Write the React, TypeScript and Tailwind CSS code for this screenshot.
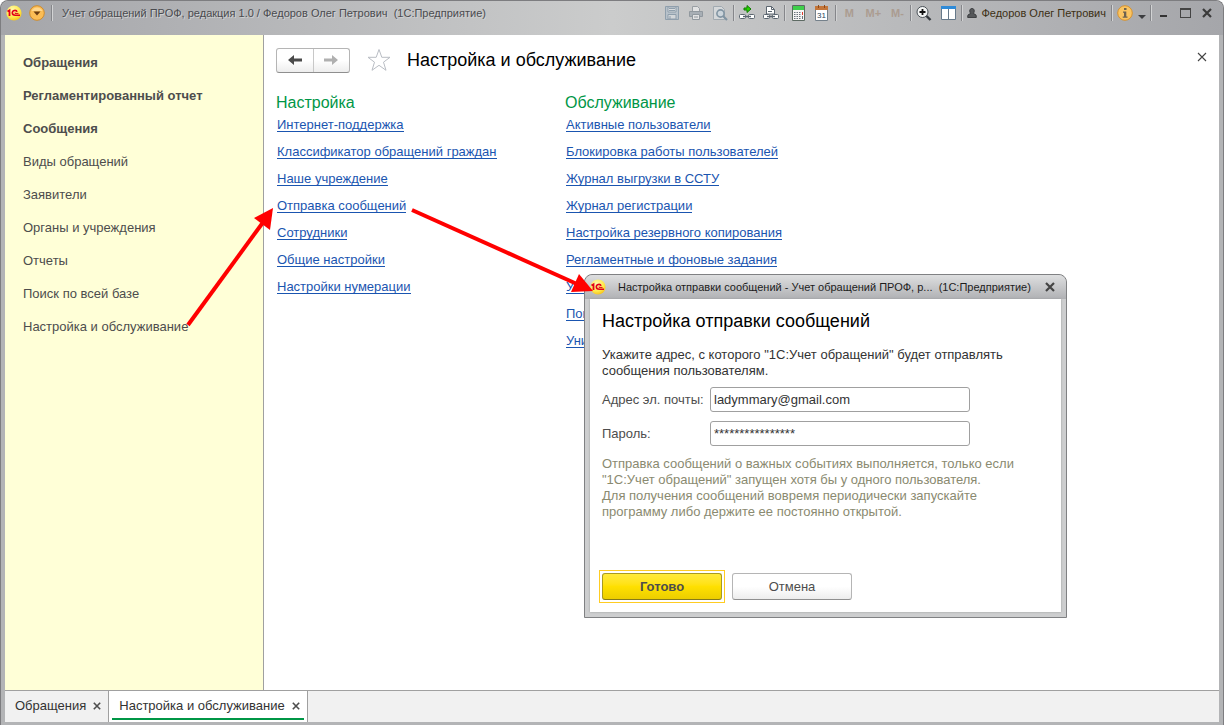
import type { ReactNode } from "react";
import { clsx } from "clsx";

const sections = [
  { title: "Обращения", strong: true },
  { title: "Регламентированный отчет", strong: true },
  { title: "Сообщения", strong: true },
  { title: "Виды обращений" },
  { title: "Заявители" },
  { title: "Органы и учреждения" },
  { title: "Отчеты" },
  { title: "Поиск по всей базе" },
  { title: "Настройка и обслуживание" },
];

const setupLinks = [
  "Интернет-поддержка",
  "Классификатор обращений граждан",
  "Наше учреждение",
  "Отправка сообщений",
  "Сотрудники",
  "Общие настройки",
  "Настройки нумерации",
];

const serviceLinks = [
  "Активные пользователи",
  "Блокировка работы пользователей",
  "Журнал выгрузки в ССТУ",
  "Журнал регистрации",
  "Настройка резервного копирования",
  "Регламентные и фоновые задания",
  "Учет",
  "Поиск",
  "Унив.",
];

function Logo() {
  return (
    <svg className="size-4 shrink-0" viewBox="0 0 16 16" aria-hidden="true">
      <defs>
        <radialGradient id="logo" cx="0.4" cy="0.3" r="0.8">
          <stop offset="0" stopColor="#fffbb0" />
          <stop offset="0.6" stopColor="#ffe94a" />
          <stop offset="1" stopColor="#f2b50c" />
        </radialGradient>
      </defs>
      <circle cx="8" cy="8" r="7.6" fill="url(#logo)" />
      <g fill="none" stroke="#e2001a">
        <path d="M1.500 6.500 3.500 5.300V11" strokeWidth="1.800" />
        <path
          d="M11 6.800C10.600 4.900 6.300 4.700 6.300 7.800c0 2.300 1.700 2.500 3 2.500h4.700"
          strokeWidth="1.600"
        />
        <path d="M9 7.600v.8h3.500" strokeWidth="1" />
      </g>
    </svg>
  );
}

function Separator() {
  return (
    <span className="mx-px h-4 w-px shrink-0 border-l border-[#85868a] shadow-[1px_0_0_#d2d3d4]" />
  );
}

function Tool({
  label,
  dim,
  children,
}: {
  label: string;
  dim?: boolean;
  children: ReactNode;
}) {
  return (
    <button
      type="button"
      aria-label={label}
      className={clsx(
        "flex h-6 w-6 shrink-0 items-center justify-center",
        dim && "opacity-50",
      )}
    >
      {children}
    </button>
  );
}

function Icon({ children }: { children: ReactNode }) {
  return (
    <svg className="size-4" viewBox="0 0 16 16" fill="none" aria-hidden="true">
      {children}
    </svg>
  );
}

function CrossIcon({ className, width = 2 }: { className: string; width?: number }) {
  return (
    <svg className={className} viewBox="0 0 10 10" aria-hidden="true">
      <path d="M1 1l8 8M9 1 1 9" stroke="currentColor" strokeWidth={width} />
    </svg>
  );
}

function Memory({ children }: { children: ReactNode }) {
  return (
    <button
      type="button"
      className="h-6 w-6 shrink-0 text-center text-[11px] font-bold text-[#ab9c91]"
    >
      {children}
    </button>
  );
}

function Chain() {
  return (
    <>
      <rect x="0.5" y="9.5" width="6" height="4" rx="1" fill="#fff" stroke="#5c6670" />
      <rect x="9.5" y="9.5" width="6" height="4" rx="1" fill="#fff" stroke="#5c6670" />
      <path d="M4 11.5h8" stroke="#5c6670" strokeWidth="1.4" />
    </>
  );
}

function TitleBar() {
  return (
    <header className="-mx-1 flex h-[34px] shrink-0 items-start rounded-t-lg bg-linear-to-r from-[#a5a6aa] via-[#cbcccc] to-[#a5a6aa] px-[5px] text-[11px] text-[#3f3f44]">
      <div className="flex h-6 min-w-0 flex-1 items-center">
        <Logo />
        <button type="button" aria-label="Главное меню" className="ml-[7px]">
          <svg className="size-4" viewBox="0 0 16 16" aria-hidden="true">
            <circle cx="8" cy="8" r="7.3" fill="#fbbd55" stroke="#cf8c2d" />
            <path d="M2.5 6a6 6 0 0 1 11 0z" fill="#ffd78d" />
            <path d="M4.5 6.5h7L8 10.5z" fill="#6b3d12" />
          </svg>
        </button>
        <span className="mr-2 ml-1.5 h-4 border-l border-[#85868a] shadow-[1px_0_0_#d2d3d4]" />
        <span className="truncate pl-0.5 text-[#4a4b4f] [text-shadow:1px_1px_0_#d0d1d2]">
          Учет обращений ПРОФ, редакция 1.0 / Федоров Олег Петрович&nbsp; (1С:Предприятие)
        </span>
      </div>
      <div className="flex h-6 shrink-0 items-center">
        <Tool label="Сохранить" dim>
          <Icon>
            <path d="M1.5 1.5h13v13h-13z" fill="#a9bccb" stroke="#587791" />
            <path d="M4 2h8v5H4z" fill="#eef3f6" stroke="#587791" />
            <path d="M4 9.5h8V14H4zM6 11v3M5 3.5h6M5 5.5h6" fill="#dfe6eb" stroke="#587791" />
          </Icon>
        </Tool>
        <Tool label="Печать" dim>
          <Icon>
            <path d="M4.5 6V1.5h5l2 2V6" fill="#fff" stroke="#6d7780" />
            <path d="M1.5 6.5h13v5h-13z" fill="#8b98a4" stroke="#5e6c78" />
            <path d="M4.5 9.5h7v5h-7zM6 12h4" fill="#fff" stroke="#5e6c78" />
          </Icon>
        </Tool>
        <Tool label="Предварительный просмотр" dim>
          <Icon>
            <path d="M1.5 1.5h8l3 3v10h-11z" fill="#e6ebee" stroke="#7e8f9c" />
            <circle cx="8.5" cy="8.5" r="3.6" fill="#d5e6f2" stroke="#3f6480" strokeWidth="1.6" />
            <path d="m11 11 4 4" stroke="#3f6480" strokeWidth="2.2" />
          </Icon>
        </Tool>
        <Separator />
        <Tool label="Получить ссылку">
          <Icon>
            <Chain />
            <path d="M5 3h3V.5L12 4 8 7.500V5H5z" fill="#25d400" stroke="#137a05" />
          </Icon>
        </Tool>
        <Tool label="Перейти по ссылке">
          <Icon>
            <path d="M3.500 9V1.500h5l3 3V9z" fill="#fff" stroke="#5c6670" />
            <path d="M8.500 1.500v3h3M5 6.500h4" stroke="#5c6670" />
            <Chain />
          </Icon>
        </Tool>
        <Separator />
        <Tool label="Калькулятор">
          <Icon>
            <path d="M2.500.5h12v15h-12z" fill="#f5f5f5" stroke="#5d6a63" />
            <path d="M3 1h11v4H3z" fill="#3fcf4b" />
            <path d="M4 7.500h7M4 9.500h7M4 11.500h7M4 13.500h7" stroke="#69727a" strokeDasharray="1.500 1" />
            <path d="M12.500 7v3" stroke="#e23b2e" />
            <path d="M12.500 11v3" stroke="#69727a" />
          </Icon>
        </Tool>
        <Tool label="Календарь">
          <Icon>
            <path d="M1.500 1.500h12v14h-12z" fill="#fff" stroke="#75818b" />
            <path d="M1 1h13v4H1z" fill="#c4763a" />
            <path d="M4.500 0v3M10.500 0v3" stroke="#8a4a1c" />
            <text x="7.500" y="13" fontSize="8" textAnchor="middle" fill="#28445c">
              31
            </text>
          </Icon>
        </Tool>
        <Separator />
        <Memory>M</Memory>
        <Memory>M+</Memory>
        <Memory>M-</Memory>
        <Separator />
        <Tool label="Масштаб">
          <Icon>
            <circle cx="6.500" cy="7" r="5.500" fill="#f4f5f5" stroke="#4b5258" />
            <path d="M3.500 7h6M6.500 4v6" stroke="#111" strokeWidth="1.800" />
            <path d="m10.500 11 4 4" stroke="#33383d" strokeWidth="2.400" />
          </Icon>
        </Tool>
        <Tool label="Панели">
          <Icon>
            <path d="M1.500 1.500h14v13h-14z" fill="#fff" stroke="#66798a" />
            <path d="M1 1h15v3H1z" fill="#2f8bd8" />
            <path d="M8.500 4v11" stroke="#66798a" />
          </Icon>
        </Tool>
        <Separator />
        <button
          type="button"
          className="flex h-6 items-center gap-1 px-1 text-[#3c2f14]"
        >
          <svg className="size-2.5" viewBox="0 0 10 10" aria-hidden="true">
            <path
              d="M5 .5c1.500 0 2.300 1 2.300 2.400C7.300 4.200 6.600 5 6.300 5.500c.8.500 3 .7 3 2.500v1.500H.7V8c0-1.800 2.200-2 3-2.500-.3-.5-1-1.300-1-2.600C2.700 1.500 3.500.5 5 .5z"
              fill="#55575a"
              stroke="#2f3133"
              strokeWidth="0.8"
            />
          </svg>
          Федоров Олег Петрович
        </button>
        <Separator />
        <Tool label="Информация">
          <Icon>
            <circle cx="8" cy="8" r="7.300" fill="#fbc562" stroke="#d6922f" />
            <path d="M7 3h2.500v2H7zM6 6.500h3.300v5h1.200v1.300H5.700v-1.300H7V7.800H6z" fill="#6e6350" />
          </Icon>
        </Tool>
        <button type="button" aria-label="Еще" className="flex h-6 w-3 items-end pb-1">
          <svg className="h-2 w-2.5" viewBox="0 0 10 8" aria-hidden="true">
            <path d="M1 2h8L5 6z" fill="#3c3d40" />
          </svg>
        </button>
        <Separator />
        <button
          type="button"
          aria-label="Свернуть"
          className="flex h-6 w-[22px] items-end justify-center pb-2"
        >
          <span className="h-0.5 w-[7px] bg-[#333]" />
        </button>
        <button
          type="button"
          aria-label="Развернуть"
          className="flex h-6 w-[22px] items-center justify-center"
        >
          <span className="h-2.5 w-[11px] border border-t-2 border-[#444]" />
        </button>
        <button
          type="button"
          aria-label="Закрыть программу"
          className="flex h-6 w-[22px] items-center justify-center text-[#3a3a3a]"
        >
          <CrossIcon className="size-2.5" width={2.2} />
        </button>
      </div>
    </header>
  );
}

function LinkColumn({ title, links }: { title: string; links: string[] }) {
  return (
    <section className="w-[289px]">
      <h2 className="text-base leading-5 text-[#009646]">{title}</h2>
      <ul>
        {links.map((link) => (
          <li key={link} className="flex h-[27px] items-start pt-1.5">
            <a
              href="#"
              className="ml-px border-b border-[#1a55b0] text-[13px] leading-3 whitespace-nowrap text-[#1a55b0]"
            >
              {link}
            </a>
          </li>
        ))}
      </ul>
    </section>
  );
}

function SettingsPage() {
  return (
    <main className="min-w-0 flex-1 bg-white pt-3 pl-3">
      <div className="flex h-[26px] items-center">
        <div className="flex h-[25px] w-[74px] rounded-[3px] border border-[#b5b5b5] border-b-[#8f8f8f] bg-linear-to-b from-white from-50% to-[#ededed]">
          <button
            type="button"
            aria-label="Назад"
            className="flex flex-1 items-center justify-center border-r border-[#c8c8c8] text-[#4a4a4a]"
          >
            <svg className="h-3 w-3.5" viewBox="0 0 14 12" aria-hidden="true">
              <path d="M0 6l6-5v3.500h8v3H6V11z" fill="currentColor" />
            </svg>
          </button>
          <button
            type="button"
            aria-label="Вперед"
            className="flex flex-1 items-center justify-center text-[#b0b0b0]"
          >
            <svg className="h-3 w-3.5" viewBox="0 0 14 12" aria-hidden="true">
              <path d="M14 6 8 1v3.500H0v3h8V11z" fill="currentColor" />
            </svg>
          </button>
        </div>
        <button type="button" aria-label="Добавить в избранное" className="ml-[17px]">
          <svg className="size-6" viewBox="0 0 24 24" fill="none" aria-hidden="true">
            <path
              d="M12 1.500 14.800 9.300H23L16.500 14.200 19 22.300 12 17.300 5 22.300 7.500 14.200 1 9.300H9.200z"
              stroke="#b9bdc4"
            />
          </svg>
        </button>
        <h1 className="ml-4 text-lg text-black">Настройка и обслуживание</h1>
        <button
          type="button"
          aria-label="Закрыть"
          className="mr-3 mb-1.5 ml-auto text-[#444]"
        >
          <CrossIcon className="size-2.5" width={1.1} />
        </button>
      </div>
      <div className="flex pt-5">
        <LinkColumn title="Настройка" links={setupLinks} />
        <LinkColumn title="Обслуживание" links={serviceLinks} />
      </div>
    </main>
  );
}

function MailDialog() {
  return (
    <div
      role="dialog"
      aria-labelledby="mail-title"
      className="absolute top-[274px] left-[584px] w-[483px] rounded-t-lg border border-[#808183] bg-[#cdcecf] px-[5px] pb-[5px]"
    >
      <div className="-mx-[5px] flex h-6 items-center rounded-t-lg bg-linear-to-b from-[#dedfe0] to-[#b0b1b4] pr-[11px] pl-[5px] text-[#1c1c1c]">
        <Logo />
        <span className="ml-3 flex-1 text-[11px] whitespace-nowrap">
          Настройка отправки сообщений - Учет обращений ПРОФ, р...&nbsp; (1С:Предприятие)
        </span>
        <button type="button" aria-label="Закрыть окно" className="text-[#444]">
          <CrossIcon className="size-2.5" width={2.2} />
        </button>
      </div>
      <form className="bg-white px-3 pt-2.5 pb-[9px] text-[13px] text-[#4d4d4d] shadow-[0_0_2px_#9a9b9d]">
        <h2 id="mail-title" className="text-lg leading-6 text-black">
          Настройка отправки сообщений
        </h2>
        <p className="mt-3.5 leading-4 text-[#333]">
          Укажите адрес, с которого "1С:Учет обращений" будет отправлять
          <br />
          сообщения пользователям.
        </p>
        <div className="mt-2 flex items-center">
          <label htmlFor="email" className="w-[108px] whitespace-nowrap">
            Адрес эл. почты:
          </label>
          <input
            id="email"
            type="text"
            defaultValue="ladymmary@gmail.com"
            className="h-[25px] w-[260px] rounded-[3px] border border-[#a0a0a0] px-[3px] text-[#333]"
          />
        </div>
        <div className="mt-[9px] flex items-center">
          <label htmlFor="password" className="w-[108px]">
            Пароль:
          </label>
          <input
            id="password"
            type="text"
            defaultValue="****************"
            className="h-[25px] w-[260px] rounded-[3px] border border-[#a0a0a0] px-[3px] text-[#333]"
          />
        </div>
        <p className="mt-2.5 leading-4 text-[#8a8a70]">
          Отправка сообщений о важных событиях выполняется, только если
          <br />
          "1С:Учет обращений" запущен хотя бы у одного пользователя.
          <br />
          Для получения сообщений вовремя периодически запускайте
          <br />
          программу либо держите ее постоянно открытой.
        </p>
        <div className="-ml-[3px] flex items-center gap-[7px] pt-[50px]">
          <div className="border border-[#fc2] p-0.5">
            <button
              type="button"
              className="block h-[27px] w-[120px] rounded-[3px] border border-[#a89a20] border-b-[#857a1a] bg-linear-to-b from-[#ffea3a] via-[#ffe000] to-[#ecce00] font-bold text-[#4d4d4d]"
            >
              Готово
            </button>
          </div>
          <button
            type="button"
            className="h-[27px] w-[120px] rounded-[3px] border border-[#b5b5b5] border-b-[#8f8f8f] bg-linear-to-b from-white from-50% to-[#ededed]"
          >
            Отмена
          </button>
        </div>
      </form>
    </div>
  );
}

function Tab({ title, active }: { title: string; active?: boolean }) {
  return (
    <div
      className={clsx(
        "flex border-r border-[#a0a0a0] px-[3px]",
        active && "bg-white",
      )}
    >
      <div
        className={clsx(
          "mb-0.5 flex items-center gap-[7px] border-b-2 pt-0.5 pr-1 pl-[7px]",
          active ? "border-[#009646]" : "border-transparent",
        )}
      >
        <button type="button" className="text-[13px]">
          {title}
        </button>
        <button type="button" aria-label={`Закрыть: ${title}`} className="text-[#4d4d4d]">
          <CrossIcon className="size-2" />
        </button>
      </div>
    </div>
  );
}

// Red callout arrows drawn over the window
function Arrows() {
  return (
    <svg
      className="pointer-events-none absolute top-0 left-0"
      width="620"
      height="340"
      viewBox="0 0 620 340"
      aria-hidden="true"
    >
      <g stroke="#f00" strokeWidth="4">
        <path d="M188 325 264 221" />
        <path d="M412 210 577 284" />
      </g>
      <g fill="#f00">
        <path d="M273 208 270 230 254 218z" />
        <path d="M593 291 571 292 579 274z" />
      </g>
    </svg>
  );
}

export default function App() {
  return (
    <div className="relative flex min-h-screen flex-col font-['Liberation_Sans',Arial,sans-serif] text-[#333]">
      <div className="flex flex-1 flex-col rounded-t-lg border-x border-t border-[#7d7d80] bg-[#b3b4b6] px-1 pb-[3px]">
        <TitleBar />
        <div className="flex flex-1">
          <nav className="w-[259px] shrink-0 border-r border-[#a0a0a0] bg-[#ffffd7] pt-[11px]">
            {sections.map(({ title, strong }) => (
              <a
                key={title}
                href="#"
                className={clsx(
                  "flex h-[33px] items-center pl-[18px] text-[13px] text-[#4d4d4d]",
                  strong && "font-bold",
                )}
              >
                {title}
              </a>
            ))}
          </nav>
          <SettingsPage />
        </div>
        <footer className="flex h-8 shrink-0 border-t border-[#a0a0a0] bg-[#f1f1f1]">
          <Tab title="Обращения" />
          <Tab title="Настройка и обслуживание" active />
        </footer>
      </div>
      <MailDialog />
      <Arrows />
    </div>
  );
}
